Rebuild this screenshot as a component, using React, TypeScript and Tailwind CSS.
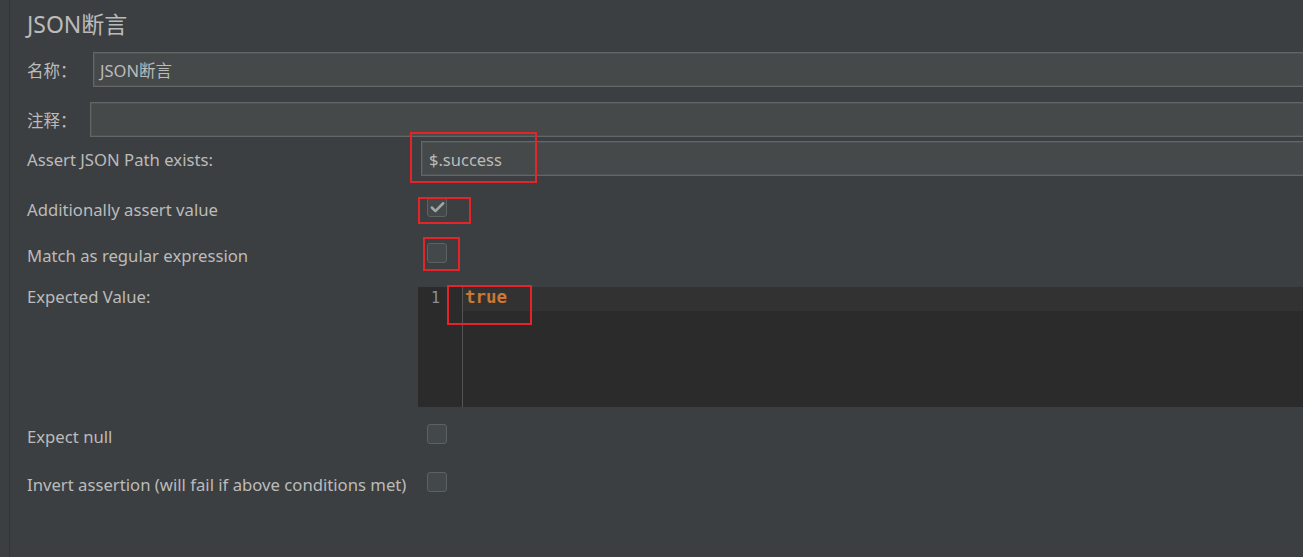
import { Check } from "lucide-react";

const font = "font-['Noto_Sans','Noto_Sans_CJK_SC',sans-serif]";

function Box({ checked = false }: { checked?: boolean }) {
  return (
    <div className="ml-[9px] flex h-[20px] w-[20px] items-center justify-center rounded-[3px] border border-[#5e6162] bg-[#43494a]">
      {checked && <Check className="h-[17px] w-[17px] text-[#a3a5a7]" strokeWidth={3.5} />}
    </div>
  );
}

function TextField({ value, className }: { value?: string; className: string }) {
  return (
    <div
      className={`flex h-[35px] flex-1 items-center border border-[#646565] bg-[#45494a] px-[6px] pt-[3px] text-[16.5px] text-[#bbbbbb] shadow-[inset_0_0_0_1px_#4e5254] ${className}`}
    >
      {value}
    </div>
  );
}

function CheckRow({ label, checked, h }: { label: string; checked?: boolean; h: string }) {
  return (
    <div className={`flex items-center ${h}`}>
      <div className="w-[391px] pt-[6px] text-[16.7px] text-[#bbbbbb]">{label}</div>
      <Box checked={checked} />
    </div>
  );
}

export default function App() {
  return (
    <div className={`relative h-[557px] w-[1303px] overflow-hidden bg-[#3c3f41] ${font}`}>
      <div className="ml-[9px] h-full border-l border-[#323436] pl-[17px]">
        {/* title */}
        <div className="h-[52px] pt-[9px] text-[23px] leading-[30px] text-[#bbbbbb]">JSON断言</div>

        <div className="flex h-[35px] items-center">
          <div className="w-[66px] pt-[4px] text-[16.5px] text-[#bbbbbb]">名称：</div>
          <TextField value="JSON断言" className="-mr-[10px]" />
        </div>

        <div className="mt-[15px] flex h-[35px] items-center">
          <div className="w-[63px] pt-[4px] text-[16.5px] text-[#bbbbbb]">注释：</div>
          <TextField className="-mr-[10px]" />
        </div>

        <div className="mt-[4px] flex h-[35px] items-center">
          <div className="w-[394px] pt-[2px] text-[16.7px] text-[#bbbbbb]">Assert JSON Path exists:</div>
          <TextField value="$.success" className="-mr-[10px] px-[7px]" />
        </div>

        <div className="mt-[8px]">
          <CheckRow label="Additionally assert value" checked h="h-[46px]" />
          <CheckRow label="Match as regular expression" h="h-[46px]" />
        </div>

        {/* expected value editor */}
        <div className="mt-[11px] flex h-[120px]">
          <div className="w-[391px] text-[16.7px] leading-[20px] text-[#bbbbbb]">Expected Value:</div>
          <div className="-mr-[10px] flex flex-1 bg-[#2b2b2b] font-['DejaVu_Sans_Mono',monospace]">
            <div className="w-[45px] border-r border-[#555555]">
              <div className="h-[24px] w-[22px] text-right text-[15px] leading-[22px] text-[#8a9096]">1</div>
            </div>
            <div className="flex-1">
              <div className="h-[24px] bg-[#323232] pl-[2px] text-[17.5px] font-bold leading-[20px] text-[#cc7832]">true</div>
            </div>
          </div>
        </div>

        <div className="mt-[3px]">
          <CheckRow label="Expect null" h="h-[48px]" />
          <CheckRow label="Invert assertion (will fail if above conditions met)" h="h-[48px]" />
        </div>
      </div>

      {/* red annotation boxes */}
      <div className="absolute left-[410px] top-[132px] h-[51px] w-[127px] border-2 border-[#e5242a]" />
      <div className="absolute left-[418px] top-[197px] h-[27px] w-[53px] border-2 border-[#e5242a]" />
      <div className="absolute left-[423px] top-[237px] h-[34px] w-[37px] border-2 border-[#e5242a]" />
      <div className="absolute left-[447px] top-[285px] h-[40px] w-[85px] border-2 border-[#e5242a]" />
    </div>
  );
}
